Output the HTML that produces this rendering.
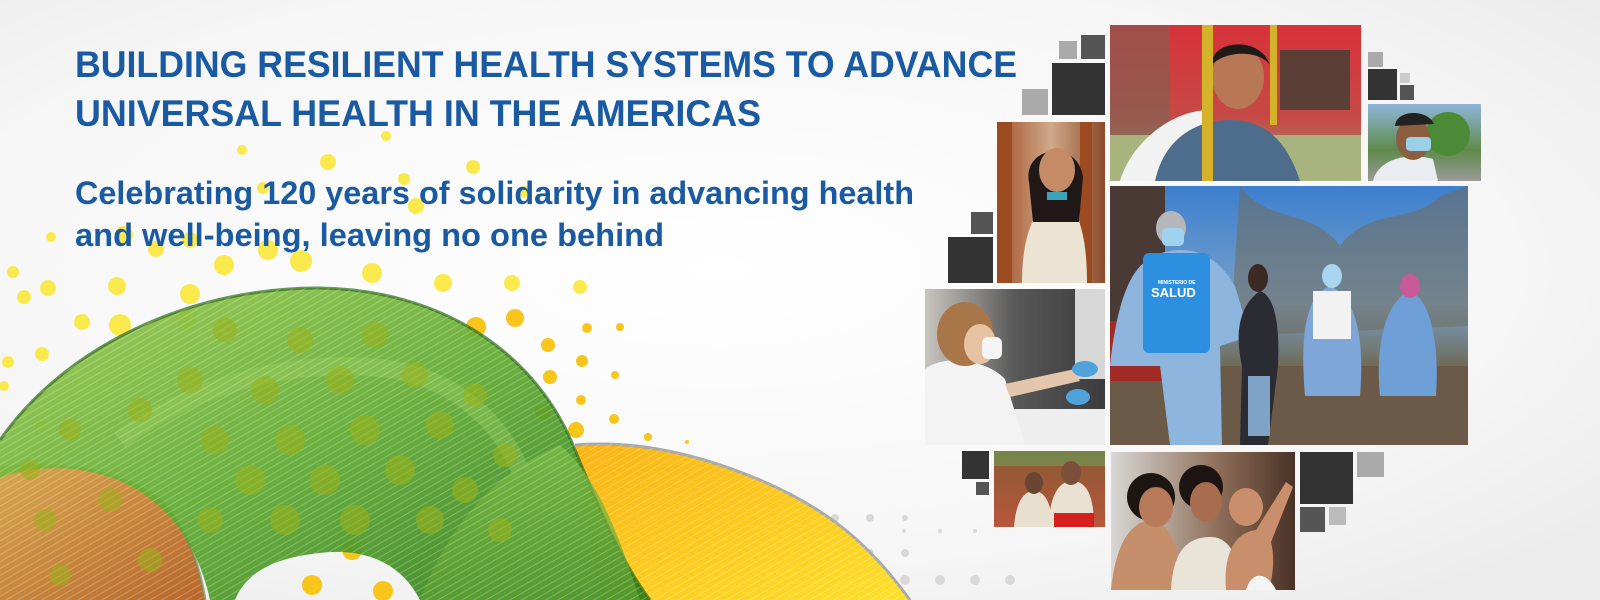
<!DOCTYPE html>
<html><head><meta charset="utf-8">
<style>
html,body{margin:0;padding:0;width:1600px;height:600px;overflow:hidden;background:#f7f7f7}
svg{display:block}
</style></head><body>
<svg width="1600" height="600" viewBox="0 0 1600 600" xmlns="http://www.w3.org/2000/svg">
<defs>
<radialGradient id="bg" cx="0.45" cy="0.45" r="0.7">
<stop offset="0" stop-color="#ffffff"/><stop offset="0.7" stop-color="#f6f6f6"/><stop offset="1" stop-color="#ececec"/>
</radialGradient>
<linearGradient id="green" x1="0" y1="0" x2="1" y2="1">
<stop offset="0" stop-color="#9ccb4e"/><stop offset="0.5" stop-color="#5faa30"/><stop offset="1" stop-color="#2a7a18"/>
</linearGradient>
<linearGradient id="green2" x1="0" y1="0" x2="0" y2="1">
<stop offset="0" stop-color="#7fc048"/><stop offset="1" stop-color="#5ea032"/>
</linearGradient>
<linearGradient id="yel" x1="0" y1="0" x2="1" y2="1">
<stop offset="0" stop-color="#fbb414"/><stop offset="1" stop-color="#fde02a"/>
</linearGradient>
<linearGradient id="ora" x1="0" y1="0" x2="1" y2="1">
<stop offset="0" stop-color="#d7a850"/><stop offset="1" stop-color="#b8662a"/>
</linearGradient>
<pattern id="lines" width="6" height="6" patternUnits="userSpaceOnUse" patternTransform="rotate(-30)">
<rect width="6" height="1" fill="#ffffff" opacity="0.25"/>
</pattern>
<linearGradient id="p_boy" x1="0" y1="0" x2="0" y2="1"><stop offset="0" stop-color="#d8323a"/><stop offset="0.6" stop-color="#c54a45"/><stop offset="1" stop-color="#9aa27a"/></linearGradient>
<linearGradient id="p_man" x1="0" y1="0" x2="0" y2="1"><stop offset="0" stop-color="#8fb6d9"/><stop offset="0.6" stop-color="#5f8a4a"/><stop offset="1" stop-color="#9a9a98"/></linearGradient>
<linearGradient id="p_girl" x1="0" y1="0" x2="1" y2="0"><stop offset="0" stop-color="#a3532a"/><stop offset="0.5" stop-color="#cfa98a"/><stop offset="1" stop-color="#8b4a2a"/></linearGradient>
<linearGradient id="p_lab" x1="0" y1="0" x2="1" y2="0"><stop offset="0" stop-color="#c9c6c0"/><stop offset="0.5" stop-color="#585858"/><stop offset="1" stop-color="#3b3b3b"/></linearGradient>
<linearGradient id="p_big" x1="0" y1="0" x2="0" y2="1"><stop offset="0" stop-color="#3c7fcf"/><stop offset="0.45" stop-color="#7aa1c8"/><stop offset="0.7" stop-color="#6f6a55"/><stop offset="1" stop-color="#5b4c3c"/></linearGradient>
<linearGradient id="p_small" x1="0" y1="0" x2="0" y2="1"><stop offset="0" stop-color="#8a5a33"/><stop offset="1" stop-color="#b9563c"/></linearGradient>
<linearGradient id="p_mom" x1="0" y1="0" x2="1" y2="0"><stop offset="0" stop-color="#d9d8d6"/><stop offset="0.6" stop-color="#8b6b55"/><stop offset="1" stop-color="#4a3227"/></linearGradient>
</defs>
<rect width="1600" height="600" fill="url(#bg)"/>

<g fill="#fbe83a" opacity="0.9">
<circle cx="242" cy="150" r="5"/><circle cx="263" cy="188" r="6"/><circle cx="328" cy="162" r="8"/><circle cx="386" cy="136" r="5"/><circle cx="404" cy="179" r="6"/><circle cx="416" cy="206" r="8"/><circle cx="473" cy="167" r="7"/><circle cx="525" cy="192" r="6"/>
<circle cx="124" cy="235" r="9"/><circle cx="156" cy="249" r="8"/><circle cx="190" cy="240" r="8"/><circle cx="224" cy="265" r="10"/><circle cx="268" cy="250" r="10"/><circle cx="301" cy="261" r="11"/><circle cx="372" cy="273" r="10"/><circle cx="443" cy="283" r="9"/><circle cx="512" cy="283" r="8"/><circle cx="580" cy="287" r="7"/><circle cx="13" cy="272" r="6"/><circle cx="48" cy="288" r="8"/><circle cx="117" cy="286" r="9"/><circle cx="190" cy="294" r="10"/><circle cx="51" cy="237" r="5"/>
<circle cx="24" cy="297" r="7"/><circle cx="82" cy="322" r="8"/><circle cx="120" cy="325" r="11"/><circle cx="186" cy="320" r="11"/><circle cx="8" cy="362" r="6"/><circle cx="42" cy="354" r="7"/><circle cx="4" cy="386" r="5"/><circle cx="41" cy="425" r="6"/>
</g>
<g fill="#f8c51b">
<circle cx="476" cy="327" r="10"/><circle cx="515" cy="318" r="9"/><circle cx="548" cy="345" r="7"/><circle cx="587" cy="328" r="5"/><circle cx="620" cy="327" r="4"/><circle cx="550" cy="377" r="7"/><circle cx="582" cy="361" r="6"/><circle cx="615" cy="375" r="4"/><circle cx="543" cy="412" r="8"/><circle cx="581" cy="400" r="5"/><circle cx="614" cy="419" r="5"/><circle cx="576" cy="430" r="8"/><circle cx="648" cy="437" r="4"/><circle cx="687" cy="442" r="2"/>
<circle cx="312" cy="585" r="10"/><circle cx="383" cy="591" r="10"/><circle cx="352" cy="550" r="10"/>
</g>
<g fill="#d8d8d8">
<circle cx="835" cy="518" r="4"/><circle cx="870" cy="518" r="4"/><circle cx="835" cy="553" r="4"/><circle cx="870" cy="553" r="4"/><circle cx="905" cy="553" r="4"/><circle cx="800" cy="553" r="4"/><circle cx="905" cy="580" r="5"/><circle cx="940" cy="580" r="5"/><circle cx="975" cy="580" r="5"/><circle cx="1010" cy="580" r="5"/><circle cx="905" cy="518" r="3"/><circle cx="904" cy="531" r="2"/><circle cx="940" cy="531" r="2"/><circle cx="975" cy="531" r="2"/>
</g>

<path d="M575,445 C640,440 700,455 760,480 C830,510 870,545 910,600 L600,600 C590,540 580,480 575,445Z" fill="url(#yel)"/>
<path d="M575,445 C640,440 700,455 760,480 C830,510 870,545 910,600" fill="none" stroke="#a9a9a9" stroke-width="3"/>
<path d="M575,445 C640,440 700,455 760,480 C830,510 870,545 910,600 L600,600Z" fill="url(#lines)"/>

<path d="M0,468 C60,460 120,470 160,500 C190,530 200,570 205,600 L0,600Z" fill="url(#ora)"/>
<path d="M0,468 C60,460 120,470 160,500 C190,530 200,570 205,600L0,600Z" fill="url(#lines)"/>
<path d="M0,468 C60,460 120,470 160,500 C190,530 200,570 205,600" fill="none" stroke="#7f8a5a" stroke-width="3" opacity="0.7"/>

<path d="M0,440 C70,340 200,287 320,288 C450,290 540,360 575,450 C600,510 620,560 650,600 L420,600 C400,560 360,548 320,553 C270,558 245,575 235,600 L210,600 C195,530 150,480 80,470 C50,466 20,470 0,478Z" fill="url(#green)" opacity="0.92"/>
<path d="M0,440 C70,340 200,287 320,288 C450,290 540,360 575,450 C600,510 620,560 650,600" fill="none" stroke="#2f6b1a" stroke-width="3" opacity="0.7"/>
<path d="M120,440 C200,380 300,360 380,368 C450,375 500,420 520,470" fill="none" stroke="#a8d66b" stroke-width="18" opacity="0.3"/>
<path d="M420,600 C450,520 500,470 560,445 C600,480 620,540 640,600Z" fill="url(#green2)" opacity="0.7"/>
<path d="M0,440 C70,340 200,287 320,288 C450,290 540,360 575,450 C600,510 620,560 650,600 L420,600 C400,560 360,548 320,553 C270,558 245,575 235,600 L210,600 C195,530 150,480 80,470 C50,466 20,470 0,478Z" fill="url(#lines)"/>
<g fill="#9bb21a" opacity="0.55">
<circle cx="225" cy="330" r="12"/><circle cx="300" cy="340" r="13"/><circle cx="375" cy="335" r="13"/><circle cx="190" cy="380" r="13"/><circle cx="265" cy="390" r="14"/><circle cx="340" cy="380" r="14"/><circle cx="415" cy="375" r="13"/><circle cx="475" cy="395" r="12"/><circle cx="140" cy="410" r="12"/><circle cx="215" cy="440" r="14"/><circle cx="290" cy="440" r="15"/><circle cx="365" cy="430" r="15"/><circle cx="440" cy="425" r="14"/><circle cx="505" cy="455" r="12"/><circle cx="250" cy="480" r="15"/><circle cx="325" cy="480" r="15"/><circle cx="400" cy="470" r="15"/><circle cx="465" cy="490" r="13"/><circle cx="210" cy="520" r="13"/><circle cx="285" cy="520" r="15"/><circle cx="355" cy="520" r="15"/><circle cx="430" cy="520" r="14"/><circle cx="500" cy="530" r="12"/><circle cx="70" cy="430" r="11"/><circle cx="30" cy="470" r="10"/>
<circle cx="45" cy="520" r="11"/><circle cx="110" cy="500" r="12"/><circle cx="150" cy="560" r="12"/><circle cx="60" cy="575" r="11"/>
</g>

<g font-family="'Liberation Sans',sans-serif" font-weight="bold" fill="#1a5aa2">
<text x="75" y="77" font-size="37" textLength="942" lengthAdjust="spacingAndGlyphs">BUILDING RESILIENT HEALTH SYSTEMS TO ADVANCE</text>
<text x="75" y="126" font-size="37" textLength="686" lengthAdjust="spacingAndGlyphs">UNIVERSAL HEALTH IN THE AMERICAS</text>
<text x="75" y="204" font-size="32" textLength="839" lengthAdjust="spacingAndGlyphs">Celebrating 120 years of solidarity in advancing health</text>
<text x="75" y="246" font-size="32" textLength="589" lengthAdjust="spacingAndGlyphs">and well-being, leaving no one behind</text>
</g>

<g>
<rect x="1081" y="35" width="24" height="24" fill="#555"/><rect x="1059" y="41" width="18" height="18" fill="#aaa"/>
<rect x="1052" y="63" width="53" height="52" fill="#333"/><rect x="1022" y="89" width="26" height="26" fill="#aaa"/>
<rect x="971" y="212" width="22" height="22" fill="#555"/><rect x="948" y="237" width="45" height="46" fill="#333"/>
<rect x="1368" y="52" width="15" height="15" fill="#aaa"/><rect x="1368" y="69" width="29" height="31" fill="#333"/>
<rect x="1400" y="73" width="10" height="10" fill="#ccc"/><rect x="1400" y="85" width="14" height="15" fill="#555"/>
<rect x="962" y="451" width="27" height="28" fill="#333"/><rect x="976" y="482" width="13" height="13" fill="#555"/>
<rect x="1300" y="452" width="53" height="52" fill="#333"/><rect x="1357" y="452" width="27" height="25" fill="#aaa"/>
<rect x="1300" y="507" width="25" height="25" fill="#555"/><rect x="1329" y="507" width="17" height="18" fill="#bbb"/>
</g>

<svg x="1110" y="25" width="251" height="156" viewBox="0 0 251 156">
<rect width="251" height="156" fill="url(#p_boy)"/>
<rect x="0" y="0" width="60" height="110" fill="#6a6a58" opacity="0.5"/>
<rect x="170" y="25" width="70" height="60" fill="#5b3e35"/>
<rect x="0" y="110" width="251" height="46" fill="#a8b37e"/>
<path d="M10,156 C20,120 60,85 100,85 L80,156Z" fill="#f2f2f2"/>
<path d="M45,156 C55,110 90,95 120,95 C150,95 175,110 190,156Z" fill="#4e6c8c"/>
<ellipse cx="128" cy="52" rx="26" ry="32" fill="#b87855"/>
<path d="M102,40 C100,15 150,10 160,40 C150,25 115,25 102,40Z" fill="#1e1a18"/>
<rect x="92" y="0" width="11" height="156" fill="#d4b22a"/>
<rect x="160" y="0" width="7" height="100" fill="#d4b22a"/>
</svg>
<svg x="1368" y="104" width="113" height="77" viewBox="0 0 113 77">
<rect width="113" height="77" fill="url(#p_man)"/>
<circle cx="80" cy="30" r="22" fill="#4b8a37"/>
<path d="M5,77 C10,55 40,48 65,55 L70,77Z" fill="#e9edf2"/>
<ellipse cx="45" cy="35" rx="17" ry="21" fill="#8b5e42"/>
<path d="M27,22 C28,5 60,5 66,20Z" fill="#222"/>
<rect x="38" y="33" width="25" height="14" rx="4" fill="#9cd0e8"/>
</svg>
<svg x="997" y="122" width="108" height="161" viewBox="0 0 108 161">
<rect width="108" height="161" fill="url(#p_girl)"/>
<rect x="0" y="0" width="15" height="161" fill="#9c4a20"/>
<rect x="83" y="0" width="12" height="161" fill="#9c4a20"/>
<path d="M25,161 C25,100 45,80 60,75 C80,80 90,110 90,161Z" fill="#ece4d3"/>
<path d="M32,60 C25,25 80,15 86,55 L82,100 L36,100Z" fill="#1f1816"/>
<ellipse cx="60" cy="48" rx="18" ry="22" fill="#c58a66"/>
<rect x="50" y="70" width="20" height="8" fill="#3aa5b8"/>
</svg>
<svg x="925" y="289" width="180" height="156" viewBox="0 0 180 156">
<rect width="180" height="156" fill="url(#p_lab)"/>
<rect x="150" y="0" width="30" height="90" fill="#d7d7d7"/>
<rect x="85" y="120" width="95" height="36" fill="#eeeeee"/>
<path d="M0,156 L0,80 C20,65 60,70 80,90 L100,156Z" fill="#f3f3f3"/>
<ellipse cx="40" cy="45" rx="28" ry="32" fill="#a9764a"/>
<ellipse cx="55" cy="55" rx="16" ry="20" fill="#e7c2a3"/>
<rect x="57" y="48" width="20" height="22" rx="6" fill="#f5f5f5"/>
<path d="M80,95 L150,80 L155,92 L85,108Z" fill="#e3c7ad"/>
<ellipse cx="160" cy="80" rx="13" ry="8" fill="#4fa3da"/>
<ellipse cx="153" cy="108" rx="12" ry="8" fill="#4fa3da"/>
</svg>
<svg x="1110" y="186" width="358" height="259" viewBox="0 0 358 259">
<rect width="358" height="259" fill="url(#p_big)"/>
<rect x="0" y="0" width="55" height="160" fill="#4a3a35"/>
<path d="M130,0 C160,40 200,20 230,60 C260,20 300,40 330,10 L358,0 L358,140 L120,150Z" fill="#6f6b5c" opacity="0.55"/>
<rect x="0" y="180" width="358" height="79" fill="#6b5a47"/>
<rect x="0" y="135" width="60" height="60" fill="#a02a25"/>
<path d="M0,180 C10,90 30,70 60,65 C90,60 110,75 125,100 L140,150 L110,160 L112,259 L60,259 L50,180Z" fill="#8db5de"/>
<rect x="33" y="67" width="67" height="100" rx="6" fill="#2c8fe0"/>
<text x="48" y="98" font-family="'Liberation Sans',sans-serif" font-size="5" font-weight="bold" fill="#fff">MINISTERIO DE</text>
<text x="41" y="111" font-family="'Liberation Sans',sans-serif" font-size="13" font-weight="bold" fill="#fff">SALUD</text>
<ellipse cx="61" cy="42" rx="15" ry="17" fill="#b5b7bb"/>
<rect x="52" y="42" width="22" height="18" rx="5" fill="#9fd2ee"/>
<path d="M130,259 L132,180 C125,150 128,120 150,105 C165,110 170,140 168,180 L158,259Z" fill="#2b2b33"/>
<rect x="138" y="190" width="22" height="60" fill="#7ea3c6"/>
<ellipse cx="148" cy="92" rx="10" ry="14" fill="#3b2a24"/>
<path d="M195,210 C190,150 195,110 220,100 C245,110 255,150 250,210Z" fill="#7fa6d8"/>
<rect x="203" y="105" width="38" height="48" fill="#f2f2f2"/>
<ellipse cx="222" cy="90" rx="10" ry="12" fill="#a9d6ee"/>
<path d="M270,210 C265,160 275,115 300,105 C318,112 330,150 326,210Z" fill="#6e9fd6"/>
<ellipse cx="300" cy="100" rx="10" ry="12" fill="#c95a9a"/>
</svg>
<svg x="994" y="451" width="111" height="76" viewBox="0 0 111 76">
<rect width="111" height="76" fill="url(#p_small)"/>
<rect x="0" y="0" width="111" height="15" fill="#6aa25a" opacity="0.6"/>
<path d="M20,76 C22,50 30,40 40,40 C52,40 58,55 58,76Z" fill="#e8e0cf"/>
<ellipse cx="40" cy="32" rx="9" ry="11" fill="#6a4533"/>
<path d="M55,76 C55,45 65,30 78,30 C95,30 100,50 100,76Z" fill="#e9e2d2"/>
<ellipse cx="77" cy="22" rx="10" ry="12" fill="#7b4f3b"/>
<rect x="60" y="62" width="40" height="14" fill="#d62020"/>
</svg>
<svg x="1111" y="452" width="184" height="138" viewBox="0 0 184 138">
<rect width="184" height="138" fill="url(#p_mom)"/>
<path d="M0,138 C5,90 20,70 40,68 C60,70 70,100 72,138Z" fill="#c48f6a"/>
<circle cx="40" cy="45" r="24" fill="#1d1512"/>
<ellipse cx="45" cy="55" rx="17" ry="20" fill="#b77a5a"/>
<path d="M60,138 C62,100 75,85 100,85 C120,85 130,110 130,138Z" fill="#e8e4d8"/>
<circle cx="90" cy="35" r="22" fill="#1d1512"/>
<ellipse cx="95" cy="50" rx="16" ry="20" fill="#a86d4e"/>
<ellipse cx="135" cy="55" rx="17" ry="19" fill="#c98f6c"/>
<path d="M115,138 C112,100 125,80 145,78 L175,30 L182,35 L160,90 C165,110 160,130 158,138Z" fill="#c98f6c"/>
<path d="M135,138 C140,120 155,118 165,138Z" fill="#f4f4f4"/>
</svg>
</svg>
</body></html>
